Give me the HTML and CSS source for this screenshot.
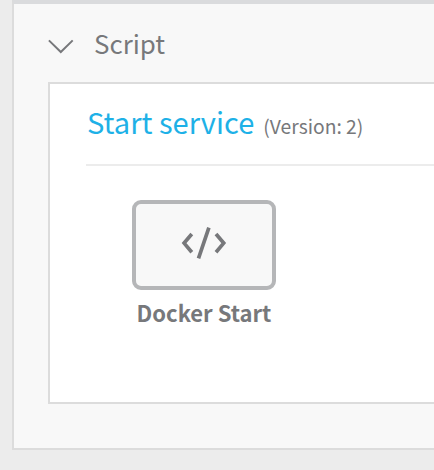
FILE: index.html
```html
<!DOCTYPE html>
<html lang="en">
<head>
<meta charset="utf-8">
<title>Script</title>
<link rel="stylesheet" href="styles.css">
</head>
<body>
<main class="section">
  <header class="section-header">
    <svg class="chevron" width="26" height="16" viewBox="0 0 26 16"><path d="M.9 1.4 12.8 13 24.7 1.4"/></svg>
    <span class="section-name">Script</span>
  </header>
  <section class="panel">
    <div class="heading">
      <span class="title">Start service</span>
      <span class="version">(Version: 2)</span>
    </div>
    <div class="step">
      <div class="step-box">
        <svg class="code" width="46" height="32" viewBox="0 0 46 32"><path d="M10.8 7 3.1 16.1 10.8 25.2M27.9 .7 17.5 31.3M35 7 42.7 16.1 35 25.2"/></svg>
      </div>
      <span class="step-name">Docker Start</span>
    </div>
  </section>
</main>
</body>
</html>
```
FILE: styles.css
```css
* { box-sizing: border-box; }
body {
  margin: 0;
  height: 470px;
  padding-left: 12px;
  overflow: hidden;
  background: #ececec;
  color: #77787b;
  font-family: "Noto Sans CJK SC", "Noto Sans", sans-serif;
}
.section {
  height: 450px;
  padding-left: 34px;
  border: solid #dcdcdc;
  border-width: 4px 0 2px 2px;
  border-top-color: #dadbdd;
  background: #f8f8f8;
}
.section-header {
  display: flex;
  height: 78px;
  padding-top: 22px;
}
.chevron { margin-top: 13px; }
.chevron path { fill: none; stroke: #77787b; stroke-width: 2; }
.section-name {
  margin-left: 20px;
  font-size: 25.9px;
  line-height: 34px;
  white-space: nowrap;
}
.panel {
  height: 322px;
  padding-left: 36px;
  border: 2px solid #dcdcdc;
  border-right: 0;
  background: #fff;
}
.heading {
  display: flex;
  align-items: baseline;
  height: 82px;
  padding: 15px 0 0 1px;
  border-bottom: 2px solid #ececec;
  white-space: nowrap;
}
.title {
  color: #1eb1e7;
  font-size: 29.1px;
  line-height: 44px;
}
.version { margin-left: 9px; font-size: 19.3px; }
.step {
  display: flex;
  flex-direction: column;
  align-items: center;
  width: 144px;
  margin: 34px 0 0 46px;
}
.step-box {
  display: flex;
  width: 144px;
  height: 90px;
  padding: 23px 0 0 45px;
  border: 4px solid #b5b6b8;
  border-radius: 9px;
  background: #f8f8f8;
}
.code path { fill: none; stroke: #77787b; stroke-width: 3.7; }
.step-name {
  margin-top: 6px;
  font-size: 22px;
  font-weight: 600;
  line-height: 32px;
  white-space: nowrap;
}
```
